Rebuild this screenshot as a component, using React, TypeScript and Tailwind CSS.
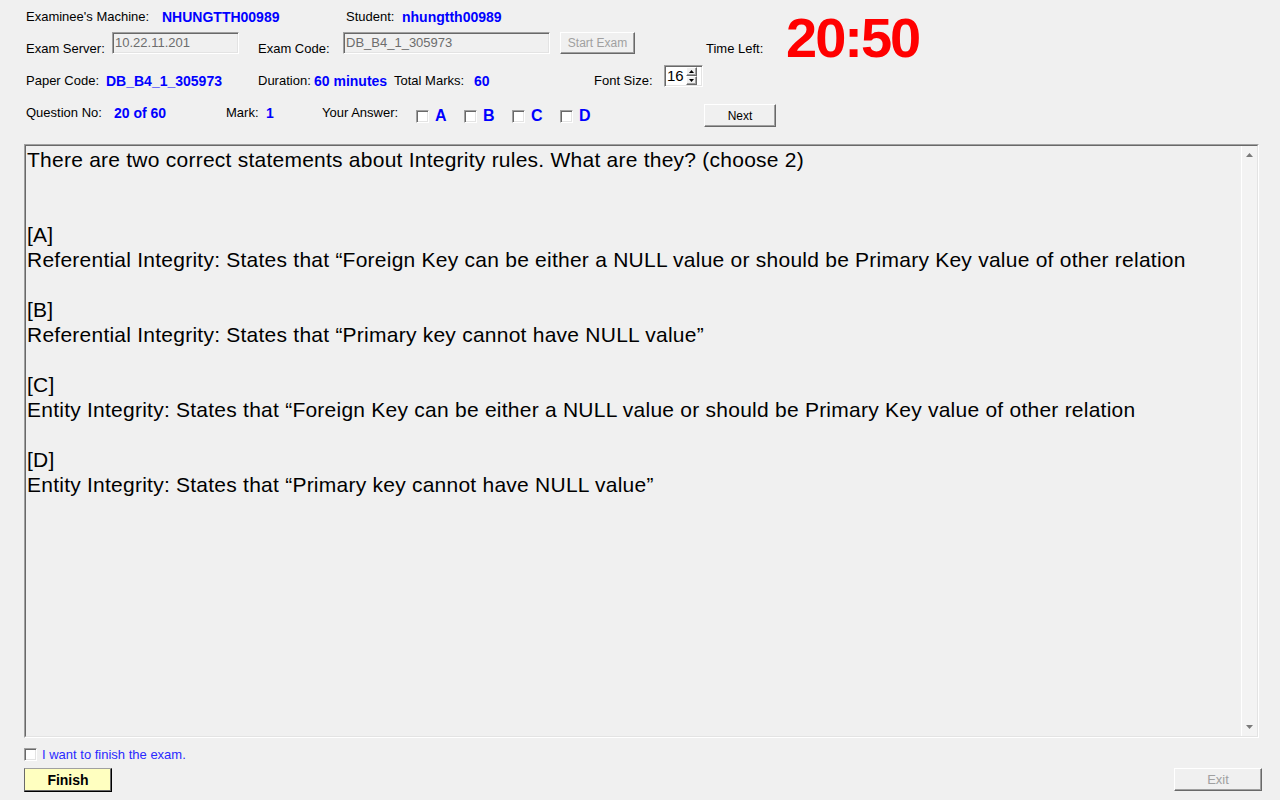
import React from "react";

const raised =
  "border border-t-white border-l-white border-r-[#696969] border-b-[#696969] shadow-[inset_-1px_-1px_0_#a0a0a0]";
const sunken =
  "border border-t-[#a0a0a0] border-l-[#a0a0a0] border-r-white border-b-white shadow-[inset_1px_1px_0_#696969,inset_-1px_-1px_0_#e3e3e3]";

function CheckBox() {
  return <div className={`w-[13px] h-[13px] bg-white ${sunken} shrink-0`} />;
}

function Answer({ letter }: { letter: string }) {
  return (
    <div className="w-[48px] flex items-start shrink-0">
      <div className="mt-[6px]">
        <CheckBox />
      </div>
      <span className="ml-[6px] mt-[4px] text-[16px] leading-[16px] font-bold text-[#0000ff]">{letter}</span>
    </div>
  );
}

const Label = ({ w, children, mt = "mt-[9px]" }: { w: string; children: React.ReactNode; mt?: string }) => (
  <span className={`${w} ${mt} shrink-0 leading-[16px] whitespace-nowrap`}>{children}</span>
);

const Value = ({ w, children, mt = "mt-[9px]" }: { w: string; children: React.ReactNode; mt?: string }) => (
  <span className={`${w} ${mt} shrink-0 text-[14px] leading-[16px] font-bold text-[#0000ff] whitespace-nowrap`}>
    {children}
  </span>
);

export default function App() {
  const lines: string[] = [
    "There are two correct statements about Integrity rules. What are they? (choose 2)",
    "",
    "",
    "[A]",
    "Referential Integrity: States that \u201cForeign Key can be either a NULL value or should be Primary Key value of other relation",
    "",
    "[B]",
    "Referential Integrity: States that \u201cPrimary key cannot have NULL value\u201d",
    "",
    "[C]",
    "Entity Integrity: States that \u201cForeign Key can be either a NULL value or should be Primary Key value of other relation",
    "",
    "[D]",
    "Entity Integrity: States that \u201cPrimary key cannot have NULL value\u201d",
  ];

  return (
    <div className="w-[1280px] h-[800px] bg-[#f0f0f0] overflow-hidden font-['Liberation_Sans',Arial,sans-serif] text-[13px] text-black flex flex-col">
      {/* Header */}
      <div className="flex pl-[26px] h-[144px] shrink-0">
        <div className="w-[750px] flex flex-col shrink-0">
          {/* Row 1 */}
          <div className="flex items-start h-[24px]">
            <Label w="w-[136px]">Examinee&apos;s Machine:</Label>
            <Value w="w-[184px]">NHUNGTTH00989</Value>
            <Label w="w-[56px]">Student:</Label>
            <Value w="w-[120px]">nhungtth00989</Value>
          </div>
          {/* Row 2 */}
          <div className="flex items-start h-[32px] mt-[8px]">
            <Label w="w-[86px]">Exam Server:</Label>
            <div className={`w-[127px] h-[22px] ${sunken} bg-[#f0f0f0] text-[#6d6d6d] pl-[2px] pt-[2px] leading-[16px] shrink-0`}>
              10.22.11.201
            </div>
            <Label w="w-[85px] ml-[19px]">Exam Code:</Label>
            <div className={`w-[207px] h-[22px] ${sunken} bg-[#f0f0f0] text-[#6d6d6d] pl-[2px] pt-[2px] leading-[16px] shrink-0`}>
              DB_B4_1_305973
            </div>
            <div className={`ml-[10px] w-[75px] h-[22px] ${raised} bg-[#f0f0f0] text-[#a0a0a0] text-[12px] flex items-center justify-center shrink-0`}>
              Start Exam
            </div>
            <Label w="w-[60px] ml-[71px]">Time Left:</Label>
          </div>
          {/* Row 3 */}
          <div className="flex items-start h-[40px]">
            <Label w="w-[80px]">Paper Code:</Label>
            <Value w="w-[152px]">DB_B4_1_305973</Value>
            <Label w="w-[56px]">Duration:</Label>
            <Value w="w-[80px]">60 minutes</Value>
            <Label w="w-[80px]">Total Marks:</Label>
            <Value w="w-[120px]">60</Value>
            <Label w="w-[70px]">Font Size:</Label>
            <div className={`mt-[1px] w-[39px] h-[22px] ${sunken} bg-white flex items-stretch shrink-0`}>
              <span className="text-[15px] leading-[19px] pl-[2px] w-[21px]">16</span>
              <div className="flex flex-col w-[11px] py-[1px]">
                <div className={`flex-1 ${raised} bg-[#f0f0f0] flex items-center justify-center`}>
                  <svg width="5" height="3" viewBox="0 0 5 3"><path d="M2.5 0 L5 3 L0 3 Z" fill="#000" /></svg>
                </div>
                <div className={`flex-1 ${raised} bg-[#f0f0f0] flex items-center justify-center`}>
                  <svg width="5" height="3" viewBox="0 0 5 3"><path d="M0 0 L5 0 L2.5 3 Z" fill="#000" /></svg>
                </div>
              </div>
            </div>
          </div>
          {/* Row 4 */}
          <div className="flex items-start h-[22px]">
            <Label w="w-[88px]" mt="mt-[1px]">Question No:</Label>
            <Value w="w-[112px]" mt="mt-[1px]">20 of 60</Value>
            <Label w="w-[40px]" mt="mt-[1px]">Mark:</Label>
            <Value w="w-[56px]" mt="mt-[1px]">1</Value>
            <Label w="w-[94px]" mt="mt-[1px]">Your Answer:</Label>
            <Answer letter="A" />
            <Answer letter="B" />
            <Answer letter="C" />
            <Answer letter="D" />
            <div className={`ml-[96px] w-[72px] h-[23px] ${raised} bg-[#f0f0f0] text-[12px] flex items-center justify-center shrink-0`}>
              Next
            </div>
          </div>
        </div>
        <div className="ml-[10px] mt-[10px] text-[56px] leading-[56px] font-bold text-[#ff0000] tracking-[-2px]">
          20:50
        </div>
      </div>

      {/* Question area */}
      <div className="ml-[24px] w-[1235px] h-[594px] border border-t-[#a0a0a0] border-l-[#a0a0a0] border-r-white border-b-white shrink-0">
        <div className="w-full h-full border border-t-[#696969] border-l-[#696969] border-r-[#e3e3e3] border-b-[#e3e3e3] flex">
          <div className="flex-1 pl-[1px] pt-[1px] text-[21px] leading-[25px] tracking-[0.24px] whitespace-pre">
            {lines.map((l, i) => (
              <div key={i} className="h-[25px]">
                {l}
              </div>
            ))}
          </div>
          <div className="w-[16px] bg-[#f3f3f3] border-l border-white flex flex-col justify-between items-center py-[7px]">
            <svg width="7" height="4" viewBox="0 0 7 4"><path d="M3.5 0 L7 4 L0 4 Z" fill="#7a7a7a" /></svg>
            <svg width="7" height="4" viewBox="0 0 7 4"><path d="M0 0 L7 0 L3.5 4 Z" fill="#7a7a7a" /></svg>
          </div>
        </div>
      </div>

      {/* Footer */}
      <div className="flex items-start ml-[24px] mt-[10px] h-[13px]">
        <CheckBox />
        <span className="ml-[5px] -mt-[1px] leading-[16px] text-[#2a2aff]">I want to finish the exam.</span>
      </div>
      <div className="flex justify-between pl-[24px] pr-[18px] mt-[7px]">
        <div className="w-[88px] h-[24px] bg-[#ffffc0] border border-t-[#a0a0a0] border-l-[#696969] border-r-black border-b-black shadow-[inset_-1px_-1px_0_#696969] flex items-center justify-center text-[14px] font-bold">
          Finish
        </div>
        <div className={`w-[88px] h-[23px] ${raised} bg-[#f0f0f0] text-[#a0a0a0] text-[13px] flex items-center justify-center`}>
          Exit
        </div>
      </div>
    </div>
  );
}
